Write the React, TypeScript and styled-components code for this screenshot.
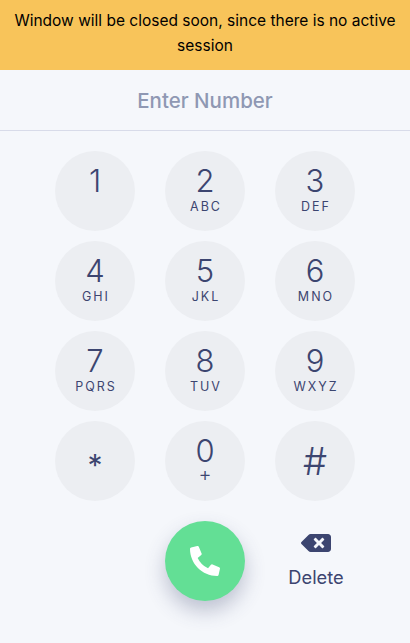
import React from "react";
import styled, { createGlobalStyle } from "styled-components";
import { FaBackspace, FaPhoneAlt } from "react-icons/fa";

const GlobalStyle = createGlobalStyle`
html, body {
  margin: 0;
  padding: 0;
  background: #f5f7fb;
  font-family: "Inter", "Liberation Sans", sans-serif;
}
`;

const keys = [
  { digit: "1", sub: "" },
  { digit: "2", sub: "ABC" },
  { digit: "3", sub: "DEF" },
  { digit: "4", sub: "GHI" },
  { digit: "5", sub: "JKL" },
  { digit: "6", sub: "MNO" },
  { digit: "7", sub: "PQRS" },
  { digit: "8", sub: "TUV" },
  { digit: "9", sub: "WXYZ" },
  { digit: "*", sub: "" },
  { digit: "0", sub: "+" },
  { digit: "#", sub: "" },
];

const App = () => {
  return (
    <>
      <GlobalStyle />
      <Page>
        <Banner>Window will be closed soon, since there is no active session</Banner>
        <NumberRow>Enter Number</NumberRow>
        <Pad>
          {keys.map((k) => (
            <Key key={k.digit}>
              {k.digit === "#" ? (
                <Hash>#</Hash>
              ) : k.digit === "*" ? (
                <Star>*</Star>
              ) : (
                <Digit>{k.digit}</Digit>
              )}
              {k.sub === "+" ? <Plus>+</Plus> : k.sub && <Sub>{k.sub}</Sub>}
            </Key>
          ))}
        </Pad>
        <Actions>
          <span />
          <CallButton>
            <FaPhoneAlt />
          </CallButton>
          <Delete>
            <DeleteIcon>
              <FaBackspace />
            </DeleteIcon>
            <DeleteText>Delete</DeleteText>
          </Delete>
        </Actions>
      </Page>
    </>
  );
};

export default App;

const Page = styled.div`
  width: 410px;
  height: 643px;
  overflow: hidden;
  background: #f5f7fb;
`;

const Banner = styled.div`
  height: 70px;
  box-sizing: border-box;
  padding: 8px 10px 0;
  background: #f8c45a;
  color: #000;
  font-size: 15.5px;
  line-height: 25px;
  text-align: center;
`;

const NumberRow = styled.div`
  height: 60px;
  border-bottom: 1px solid #d8dbe9;
  display: flex;
  align-items: center;
  justify-content: center;
  color: #8f98b3;
  font-size: 20.5px;
  font-weight: 500;
`;

const Pad = styled.div`
  display: grid;
  grid-template-columns: repeat(3, 80px);
  justify-content: center;
  gap: 10px 30px;
  padding-top: 20px;
`;

const Key = styled.div`
  width: 80px;
  height: 80px;
  border-radius: 50%;
  background: #eceef2;
  color: #3c4570;
  display: flex;
  flex-direction: column;
  align-items: center;
  box-sizing: border-box;
  padding-top: 12px;
`;

const Digit = styled.div`
  font-size: 31px;
  font-weight: 300;
  line-height: 36px;
`;

const Hash = styled.div`
  font-size: 38px;
  font-weight: 300;
  line-height: 36px;
  margin-top: 10px;
`;

const Star = styled.div`
  font-size: 30px;
  line-height: 36px;
  margin-top: 14px;
`;

const Sub = styled.div`
  font-size: 12.5px;
  line-height: 16px;
  letter-spacing: 2px;
  margin-right: -2px;
`;

const Plus = styled.div`
  font-size: 20px;
  font-weight: 300;
  line-height: 16px;
  margin-top: -3px;
`;

const Actions = styled.div`
  display: grid;
  grid-template-columns: repeat(3, 80px);
  justify-content: center;
  gap: 30px;
  padding-top: 20px;
`;

const CallButton = styled.div`
  width: 80px;
  height: 80px;
  border-radius: 50%;
  background: #63df95;
  color: #fff;
  font-size: 30px;
  display: flex;
  align-items: center;
  justify-content: center;
  box-shadow: 0 10px 20px rgba(60, 69, 112, 0.3);
`;

const Delete = styled.div`
  display: flex;
  flex-direction: column;
  align-items: center;
  color: #3c4570;
  padding-top: 7px;
  margin-left: 2px;
`;

const DeleteIcon = styled.div`
  font-size: 30px;
  line-height: 30px;
  height: 30px;
  display: flex;
  align-items: center;
`;

const DeleteText = styled.div`
  font-size: 18.3px;
  line-height: 24px;
  margin-top: 7px;
`;
